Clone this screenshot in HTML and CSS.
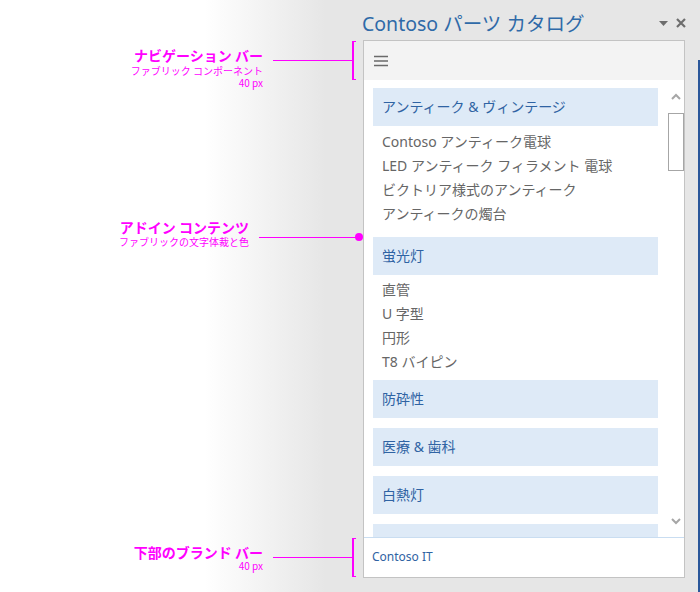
FILE: index.html
```html
<!DOCTYPE html>
<html lang="ja">
<head>
<meta charset="utf-8">
<title>Contoso パーツ カタログ</title>
<link rel="stylesheet" href="styles.css">
</head>
<body>
<div class="stage">
  <aside class="notes">
    <div class="note note-nav">
      <div class="note-text">
        <div class="note-title">ナビゲーション バー</div>
        <div class="note-sub">ファブリック コンポーネント</div>
        <div class="note-sub">40 px</div>
      </div>
      <div class="connector">
        <span class="wire"></span>
        <span class="bracket"></span>
      </div>
    </div>
    <div class="note note-content">
      <div class="note-text">
        <div class="note-title">アドイン コンテンツ</div>
        <div class="note-sub">ファブリックの文字体裁と色</div>
      </div>
      <div class="pointer">
        <span class="wire wire-long"></span>
        <span class="dot"></span>
      </div>
    </div>
    <div class="note note-footer">
      <div class="note-text">
        <div class="note-title">下部のブランド バー</div>
        <div class="note-sub">40 px</div>
      </div>
      <div class="connector">
        <span class="wire"></span>
        <span class="bracket"></span>
      </div>
    </div>
  </aside>

  <section class="pane">
    <header class="pane-title">
      <h1 class="title">Contoso パーツ カタログ</h1>
      <svg class="caret" width="9" height="5" viewBox="0 0 9 5"><polygon points="0,0 9,0 4.5,5" fill="#6d6d6d"/></svg>
      <svg class="close" width="10" height="10" viewBox="0 0 10 10"><path d="M1 1 L9 9 M9 1 L1 9" stroke="#6d6d6d" stroke-width="2.2" fill="none"/></svg>
    </header>
    <div class="panel">
      <nav class="navbar">
        <svg class="hamburger" width="14" height="12" viewBox="0 0 14 12"><path d="M0 1.5 H14 M0 6 H14 M0 10.5 H14" stroke="#6a6a6a" stroke-width="1.6" fill="none"/></svg>
      </nav>
      <div class="content">
        <div class="list">
          <div class="group-head">アンティーク &amp; ヴィンテージ</div>
          <ul class="group-items">
            <li>Contoso アンティーク電球</li>
            <li>LED アンティーク フィラメント 電球</li>
            <li>ビクトリア様式のアンティーク</li>
            <li>アンティークの燭台</li>
          </ul>
          <div class="group-head">蛍光灯</div>
          <ul class="group-items tight">
            <li>直管</li>
            <li>U 字型</li>
            <li>円形</li>
            <li>T8 バイピン</li>
          </ul>
          <div class="group-head">防砕性</div>
          <div class="group-head spaced">医療 &amp; 歯科</div>
          <div class="group-head spaced">白熱灯</div>
          <div class="group-head spaced"></div>
        </div>
        <div class="scrollbar">
          <svg class="chev" width="10" height="7" viewBox="0 0 10 7"><polyline points="1,6 5,2 9,6" fill="none" stroke="#a6a6a6" stroke-width="2"/></svg>
          <div class="thumb"></div>
          <svg class="chev chev-down" width="10" height="7" viewBox="0 0 10 7"><polyline points="1,1 5,5 9,1" fill="none" stroke="#a6a6a6" stroke-width="2"/></svg>
        </div>
      </div>
      <footer class="brandbar">Contoso IT</footer>
    </div>
  </section>

  <div class="edge"></div>
</div>
</body>
</html>
```

FILE: styles.css
```css
* { box-sizing: border-box; }

html, body {
  margin: 0;
  padding: 0;
}

body {
  width: 700px;
  height: 592px;
  overflow: hidden;
  background: linear-gradient(to right, #ffffff 0, #ffffff 205px, #e6e6e6 325px, #e6e6e6 100%);
  font-family: "Noto Sans", "Noto Sans CJK JP", sans-serif;
}

.stage {
  display: grid;
  grid-template-columns: 363px 335px 2px;
  height: 592px;
}

/* ---------- annotations ---------- */
.notes {
  display: flex;
  flex-direction: column;
  font-family: "Noto Sans CJK JP", "Noto Sans", sans-serif;
  color: #ff00ff;
}

.note {
  display: flex;
  align-items: flex-start;
}

.note-text {
  width: 263px;
  text-align: right;
  margin-top: 6px;
}

.note-title {
  font-size: 14px;
  line-height: 16px;
  font-weight: 700;
}

.note-sub {
  font-size: 10px;
  line-height: 12px;
}

.note-nav .note-title { margin-bottom: 2px; }
.note-content .note-title { margin-bottom: 1px; }

.note-nav { margin-top: 41px; }
.note-content { margin-top: 130px; }
.note-footer { margin-top: 290px; }

.note-content .note-text { margin-top: 0; }

.connector {
  display: flex;
  align-items: center;
  height: 39px;
  margin-left: 10px;
}

.wire {
  display: block;
  width: 79px;
  height: 1px;
  background: #ff00ff;
}

.bracket {
  display: block;
  width: 4px;
  height: 39px;
  border: 1px solid #ff00ff;
  border-left-width: 2px;
  border-right: 0;
}

.pointer {
  display: flex;
  align-items: center;
  margin-left: 10px;
  margin-top: 14px;
  position: relative;
  z-index: 2;
}

.wire-long { width: 97px; }

.dot {
  display: block;
  width: 8px;
  height: 8px;
  margin-left: -1px;
  border-radius: 50%;
  background: #ff00ff;
}

/* ---------- task pane ---------- */
.pane {
  display: flex;
  flex-direction: column;
}

.pane-title {
  display: flex;
  align-items: flex-start;
  height: 40px;
}

.title {
  flex: 1;
  margin: 0 0 0 -1px;
  padding-top: 12px;
  font-size: 19.5px;
  line-height: 24px;
  font-weight: 400;
  color: #2f6aa8;
  white-space: nowrap;
}

.caret { margin-top: 21px; display: block; }
.close { margin: 18px 12px 0 8px; display: block; }

.panel {
  width: 322px;
  height: 538px;
  border: 1px solid #c3c3c3;
  background: #ffffff;
  display: flex;
  flex-direction: column;
}

.navbar {
  height: 39px;
  background: #f3f3f3;
  display: flex;
  align-items: center;
  padding-left: 10px;
  padding-top: 1px;
}

.hamburger { display: block; }

.content {
  height: 457px;
  display: flex;
  overflow: hidden;
}

.list {
  flex: 1;
  padding: 8px 10px 0 9px;
  overflow: hidden;
}

.group-head {
  height: 38px;
  line-height: 38px;
  padding-left: 9px;
  background: #deeaf7;
  color: #2f63a3;
  font-size: 14px;
  white-space: nowrap;
}

.group-head.spaced { margin-top: 10px; }

.group-items {
  list-style: none;
  margin: 0;
  padding: 4px 0 11px 9px;
  color: #666666;
  font-size: 14px;
  line-height: 24px;
}

.group-items.tight { padding: 3px 0 6px 9px; }

.group-items li { white-space: nowrap; }

.scrollbar {
  width: 16px;
  display: flex;
  flex-direction: column;
  align-items: center;
  padding: 13px 0 12px;
}

.chev { display: block; }

.thumb {
  width: 16px;
  height: 58px;
  margin-top: 13px;
  border: 1px solid #a6a6a6;
  background: #ffffff;
}

.chev-down { margin-top: auto; }

.brandbar {
  height: 40px;
  border-top: 1px solid #c9ddf1;
  padding-left: 8px;
  line-height: 38px;
  font-size: 12px;
  color: #2f63a3;
}

.edge {
  margin-top: 60px;
  background: #2b579a;
}
```
